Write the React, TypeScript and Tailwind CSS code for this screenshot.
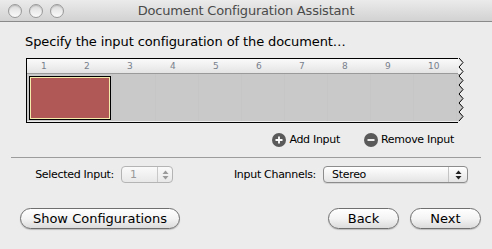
import React from "react";

const cols = ["1", "2", "3", "4", "5", "6", "7", "8", "9", "10"];

function Light() {
  return (
    <div className="h-[14px] w-[14px] rounded-full border border-[#9a9a9a] bg-gradient-to-b from-[#d8d8d8] via-[#ececec] to-[#fafafa] shadow-[inset_0_1px_1px_rgba(0,0,0,0.15)]" />
  );
}

function PillButton({ label, className }: { label: string; className: string }) {
  return (
    <button
      className={`h-[21px] rounded-full border border-[#6f6f6f] bg-gradient-to-b from-white via-[#f4f4f4] to-[#dcdcdc] text-[13px] leading-none text-black shadow-[0_1px_1px_rgba(0,0,0,0.2)] ${className}`}
    >
      {label}
    </button>
  );
}

function Arrows() {
  return (
    <svg width="7" height="10" viewBox="0 0 7 10">
      <path d="M3.5 0.5 L6.5 4 L0.5 4 Z" fill="currentColor" />
      <path d="M3.5 9.5 L6.5 6 L0.5 6 Z" fill="currentColor" />
    </svg>
  );
}

function Zigzag() {
  // right edge of the track, torn paper look
  const pts: string[] = [];
  for (let y = 0; y <= 64; y += 4.5) {
    const i = Math.round(y / 4.5);
    pts.push(`${i % 2 === 0 ? 1 : 5},${y}`);
  }
  const poly = `0,0 ${pts.join(" ")} 0,64`;
  return (
    <svg width="7" height="65" viewBox="0 0 7 65" className="block">
      <defs>
        <clipPath id="zz">
          <polygon points={poly} />
        </clipPath>
      </defs>
      <g clipPath="url(#zz)">
        <rect x="0" y="0" width="7" height="16" fill="#f2f2f2" />
        <rect x="0" y="16" width="7" height="1" fill="#9a9a9a" />
        <rect x="0" y="17" width="7" height="48" fill="#c9c9c9" />
      </g>
      <polyline points={pts.join(" ")} fill="none" stroke="#000" strokeWidth="1" />
    </svg>
  );
}

export default function App() {
  return (
    <div
      className="flex h-[249px] w-[492px] flex-col bg-[#ececec] text-black"
      style={{ fontFamily: '"DejaVu Sans", "Liberation Sans", sans-serif' }}
    >
      <div className="relative flex h-[22px] items-center border-b border-[#8a8a8a] bg-gradient-to-b from-[#ebebeb] to-[#d2d2d2] pl-[8px]">
        <div className="flex gap-[7px]">
          <Light />
          <Light />
          <Light />
        </div>
        <div className="absolute inset-x-0 top-0 flex h-[21px] items-center justify-center text-[13px] tracking-[-0.2px] text-[#4a4a4a]">
          Document Configuration Assistant
        </div>
      </div>

      <div className="pl-[25px] pt-[12px] text-[13px] leading-[16px] tracking-[-0.1px]">
        Specify the input configuration of the document…
      </div>

      <div className="ml-[26px] mt-[8px] flex">
        <div className="flex w-[432px] flex-col border-y border-l border-black">
          <div className="flex h-[15px] border-b border-[#9a9a9a] bg-gradient-to-b from-[#fafafa] via-[#efefef] to-[#e4e4e4]">
            {cols.map((c) => (
              <div key={c} className="w-[43px] pl-[14px] text-[9px] leading-[15px] text-[#78808c]">
                {c}
              </div>
            ))}
          </div>
          <div className="relative flex h-[47px] bg-[#c9c9c9]">
            {cols.map((c) => (
              <div key={c} className="h-full w-[43px] border-r border-[#c6c6c6]" />
            ))}
            <div className="absolute left-[2px] top-[2px] h-[44px] w-[82px] border border-black">
              <div className="h-full w-full border border-[#f4ecaa] bg-[#b05856]" />
            </div>
          </div>
        </div>
        <Zigzag />
      </div>

      <div className="mt-[10px] flex justify-end gap-[24px] pr-[38px] text-[11px] leading-[14px] tracking-[-0.3px]">
        <div className="flex items-center gap-[3px]">
          <svg width="14" height="14" viewBox="0 0 14 14">
            <circle cx="7" cy="7" r="7" fill="#5a5a5a" />
            <path d="M7 3.5 V10.5 M3.5 7 H10.5" stroke="#fff" strokeWidth="1.8" />
          </svg>
          <span>Add Input</span>
        </div>
        <div className="flex items-center gap-[3px]">
          <svg width="14" height="14" viewBox="0 0 14 14">
            <circle cx="7" cy="7" r="7" fill="#5a5a5a" />
            <path d="M3.5 7 H10.5" stroke="#fff" strokeWidth="1.8" />
          </svg>
          <span>Remove Input</span>
        </div>
      </div>

      <div className="mx-[11px] mt-[10px] border-t border-[#9c9c9c]" />

      <div className="mt-[8px] flex items-center text-[11px] leading-[16px] tracking-[-0.3px]">
        <span className="w-[121px] whitespace-nowrap pr-[7px] text-right">Selected Input:</span>
        <div className="flex h-[17px] w-[52px] items-center rounded-[4px] border border-[#b4b4b4] bg-gradient-to-b from-[#fafafa] to-[#e8e8e8]">
          <span className="w-[35px] pl-[8px] text-[#9a9a9a]">1</span>
          <div className="flex h-full flex-1 items-center justify-center border-l border-[#c8c8c8] text-[#9a9a9a]">
            <Arrows />
          </div>
        </div>
        <span className="w-[150px] whitespace-nowrap pr-[7px] text-right">Input Channels:</span>
        <div className="flex h-[17px] w-[145px] items-center rounded-[4px] border border-[#8c8c8c] bg-gradient-to-b from-white to-[#e4e4e4] shadow-[0_1px_0_rgba(0,0,0,0.1)]">
          <span className="flex-1 pl-[8px]">Stereo</span>
          <div className="flex h-full w-[19px] items-center justify-center border-l border-[#c4c4c4] text-[#222]">
            <Arrows />
          </div>
        </div>
      </div>

      <div className="mt-[25px] flex items-center px-[11px]">
        <PillButton label="Show Configurations" className="ml-[9px] w-[160px]" />
        <div className="flex-1" />
        <PillButton label="Back" className="w-[71px]" />
        <PillButton label="Next" className="ml-[11px] w-[71px]" />
      </div>
    </div>
  );
}
